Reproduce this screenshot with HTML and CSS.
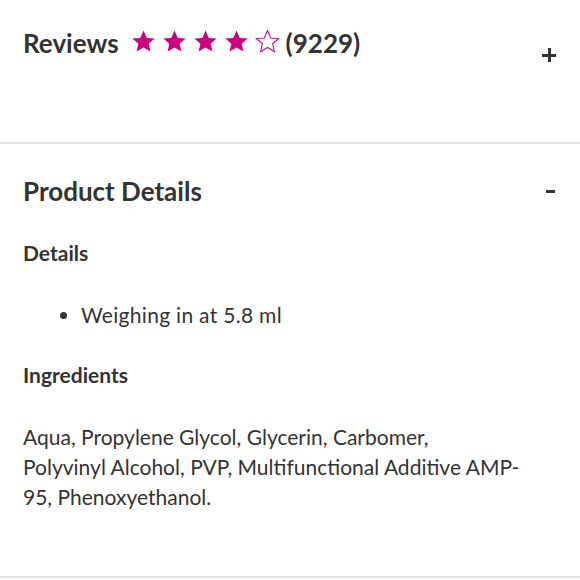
FILE: index.html
```html
<!DOCTYPE html>
<html lang="en">
  <head>
    <meta charset="UTF-8" />
    <meta name="viewport" content="width=device-width, initial-scale=1.0" />
    <title>Product Details</title>
    <link rel="stylesheet" href="styles.css">
  </head>

  <body>
    <div class="accordion">
      <section class="panel reviews">
        <div class="panel-head">
          <h2 class="title">Reviews</h2>
          <div class="stars">
            <svg class="star" viewBox="0 0 24 24"><path d="M12 1.5l3.1 7.1 7.6.6-5.8 5 1.8 7.5L12 17.7l-6.7 4 1.8-7.5-5.8-5 7.6-.6z" /></svg>
            <svg class="star" viewBox="0 0 24 24"><path d="M12 1.5l3.1 7.1 7.6.6-5.8 5 1.8 7.5L12 17.7l-6.7 4 1.8-7.5-5.8-5 7.6-.6z" /></svg>
            <svg class="star" viewBox="0 0 24 24"><path d="M12 1.5l3.1 7.1 7.6.6-5.8 5 1.8 7.5L12 17.7l-6.7 4 1.8-7.5-5.8-5 7.6-.6z" /></svg>
            <svg class="star" viewBox="0 0 24 24"><path d="M12 1.5l3.1 7.1 7.6.6-5.8 5 1.8 7.5L12 17.7l-6.7 4 1.8-7.5-5.8-5 7.6-.6z" /></svg>
            <svg class="star empty" viewBox="0 0 24 24"><path d="M12 1.5l3.1 7.1 7.6.6-5.8 5 1.8 7.5L12 17.7l-6.7 4 1.8-7.5-5.8-5 7.6-.6z" /></svg>
          </div>
          <span class="count">(9229)</span>
          <span class="toggle plus"></span>
        </div>
      </section>

      <section class="panel open">
        <div class="panel-head">
          <h2 class="title">Product Details</h2>
          <span class="toggle minus"></span>
        </div>
        <div class="panel-body">
          <h3>Details</h3>
          <ul>
            <li>Weighing in at 5.8 ml</li>
          </ul>
          <h3>Ingredients</h3>
          <p>
            Aqua, Propylene Glycol, Glycerin, Carbomer, Polyvinyl&nbsp;Alcohol, PVP,
            Multifunctional Additive AMP-95, Phenoxyethanol.
          </p>
        </div>
      </section>
    </div>
  </body>
</html>
```

FILE: styles.css
```css
* {
  margin: 0;
  padding: 0;
  box-sizing: border-box;
  font-family: "Lato", "Noto Sans", sans-serif;
}

body {
  background: #fff;
  color: #333;
}

.panel {
  border-bottom: 2px solid #e3e3e3;
  padding: 0 23px;
}

.panel-head {
  display: flex;
  align-items: center;
}

.title {
  font-size: 26px;
  font-weight: 700;
  line-height: 30px;
}

.reviews {
  height: 144px;
  padding-top: 28px;
}

.reviews .panel-head {
  align-items: flex-start;
}

.stars {
  display: flex;
  gap: 6px;
  margin-left: 12px;
  margin-top: 1px;
}

.star {
  width: 25px;
  height: 25px;
  fill: #cc007e;
}

.star.empty {
  fill: none;
  stroke: #cc007e;
  stroke-width: 1;
}

.count {
  font-size: 26px;
  font-weight: 700;
  line-height: 30px;
  margin-left: 6px;
}

.toggle {
  margin-left: auto;
  position: relative;
  width: 16px;
  height: 16px;
}

.plus {
  margin-top: 19px;
}

.toggle::before,
.toggle::after {
  content: "";
  position: absolute;
  background: #333;
}

.toggle::before {
  left: 1px;
  right: 1px;
  top: 7px;
  height: 2.5px;
}

.plus::after {
  top: 1px;
  bottom: 1px;
  left: 7px;
  width: 2.5px;
}

.minus::before {
  left: 5px;
  right: 2px;
}

.open .panel-head {
  padding-top: 32px;
}

.panel-body {
  padding: 0 0 64px;
}

.panel-body h3 {
  font-size: 21px;
  font-weight: 700;
  line-height: 30px;
  margin-top: 32px;
}

.panel-body ul {
  margin-top: 32px;
  padding-left: 58px;
}

.panel-body h3 + p {
  margin-top: 32px;
}

.panel-body ul + h3 {
  margin-top: 30px;
}

.panel-body li {
  font-size: 21px;
  line-height: 30px;
  letter-spacing: 0.3px;
}

.panel-body p {
  font-size: 21px;
  line-height: 30px;
  max-width: 500px;
}
```
